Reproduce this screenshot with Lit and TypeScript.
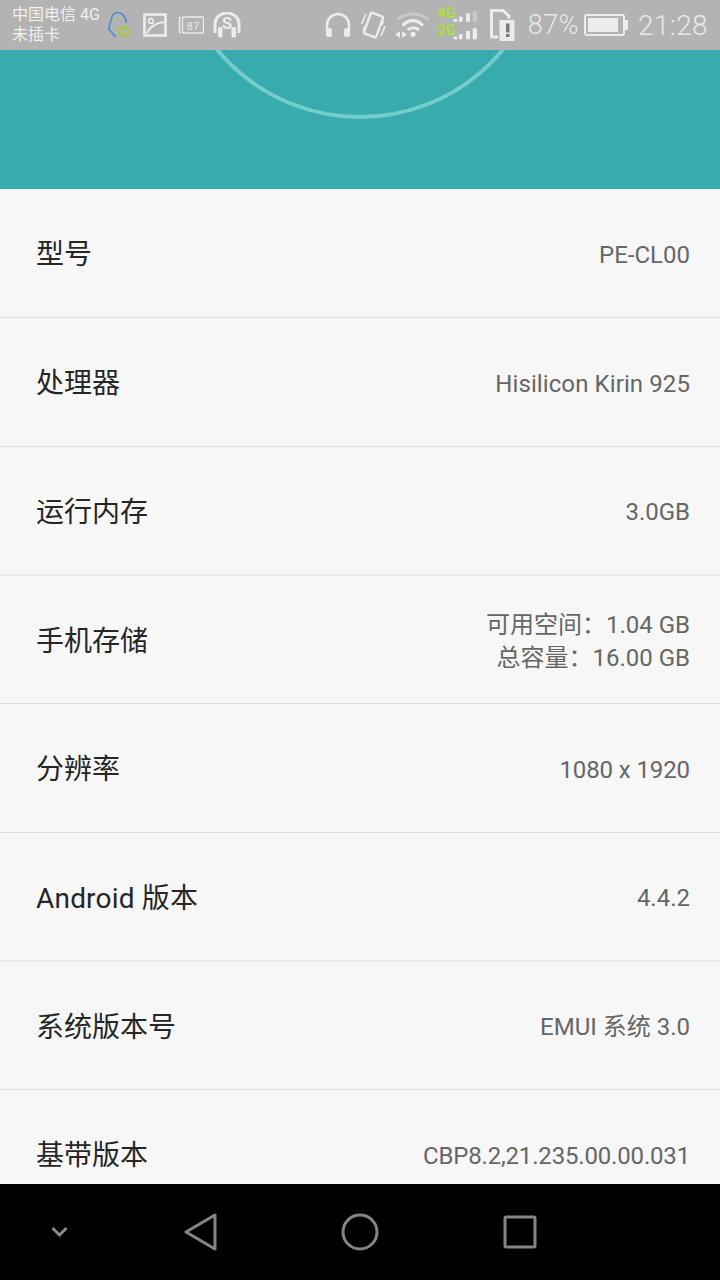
import { css, html, LitElement, svg } from 'lit';
import { customElement } from 'lit/decorators.js';

interface InfoRow {
  label: string;
  value: string[];
  // small tracking tweaks, the device's Roboto is a little different
  labelLs?: number;
  valueLs?: number;
}

const ROWS: InfoRow[] = [
  { label: '型号', value: ['PE-CL00'] },
  { label: '处理器', value: ['Hisilicon Kirin 925'], valueLs: 0.1 },
  { label: '运行内存', value: ['3.0GB'] },
  { label: '手机存储', value: ['可用空间：1.04 GB', '总容量：16.00 GB'] },
  { label: '分辨率', value: ['1080 x 1920'], valueLs: -0.1 },
  { label: 'Android 版本', value: ['4.4.2'], labelLs: 0.2 },
  { label: '系统版本号', value: ['EMUI 系统 3.0'] },
  { label: '基带版本', value: ['CBP8.2,21.235.00.00.031'], valueLs: -0.17 },
];

const W = '#ececec';

const icon = (w: number, h: number, body: unknown, ml = 0) => html`<svg
  class="ico"
  style="margin-left:${ml}px"
  width=${w}
  height=${h}
  viewBox="0 0 ${w} ${h}"
  fill="none"
  stroke=${W}
  stroke-width="2"
>${body}</svg>`;

const headphones = svg`
  <path d="M2 19v-6a11 11 0 0 1 22 0v6" stroke-width="2.6" />
  <rect x="1" y="16" width="6" height="9" rx="2.5" fill="${W}" stroke="none" />
  <rect x="19" y="16" width="6" height="9" rx="2.5" fill="${W}" stroke="none" />`;

@customElement('app-root')
export class AppRoot extends LitElement {
  static override styles = css`
    :host {
      display: block;
      width: 720px;
      height: 1280px;
      overflow: hidden;
      font-family: Roboto, 'Noto Sans CJK SC', sans-serif;
    }
    .page {
      display: flex;
      flex-direction: column;
      height: 1280px;
      background: #f7f7f7;
    }
    .status {
      flex: none;
      height: 50px;
      background: #b3b3b3;
      display: flex;
      align-items: center;
      padding: 0 12px;
    }
    .carrier {
      width: 92px;
      font-size: 16px;
      line-height: 20px;
      white-space: nowrap;
      color: #efefef;
    }
    .ico {
      flex: none;
      display: block;
    }
    .spacer {
      flex: 1;
    }
    .pct {
      margin-left: 11px;
      font-size: 27px;
      letter-spacing: 0.4px;
      color: #e8e8e8;
      font-weight: 300;
    }
    .time {
      margin-left: 9px;
      font-size: 28px;
      letter-spacing: 0.4px;
      color: #e8e8e8;
      font-weight: 300;
    }
    .net {
      position: relative;
      flex: none;
      width: 42px;
      height: 40px;
      margin-left: 8px;
    }
    .net span {
      position: absolute;
      left: 1px;
      font-size: 14px;
      line-height: 14px;
      font-weight: 700;
      color: #aee03a;
    }
    .net span:nth-child(1) {
      top: 1px;
    }
    .net span:nth-child(2) {
      top: 18px;
    }
    .net svg {
      position: absolute;
      left: 16px;
      top: 6px;
    }
    .hero {
      flex: none;
      position: relative;
      height: 139px;
      background: #38abae;
      overflow: hidden;
    }
    .ring {
      position: absolute;
      left: 173px;
      top: -305px;
      width: 374px;
      height: 374px;
      box-sizing: border-box;
      border-radius: 50%;
      border: 4px solid #74cccc;
    }
    .list {
      flex: 1;
      min-height: 0;
      overflow: hidden;
    }
    .row {
      box-sizing: border-box;
      height: 129px;
      padding: 0 30px 0 36px;
      display: flex;
      align-items: center;
      justify-content: space-between;
      border-bottom: 1px solid #dcdcdc;
    }
    /* the original rows are 128.67px, so every third line lands between two pixels */
    .row:nth-child(3n) {
      border-bottom: 2px solid #ebebeb;
    }
    .row:nth-child(3n + 1):not(:first-child) {
      height: 128px;
    }
    .label {
      font-size: 28px;
      color: #262626;
      white-space: nowrap;
      margin-bottom: 2px;
    }
    .value {
      font-size: 24px;
      line-height: 33px;
      color: #666;
      text-align: right;
      white-space: nowrap;
      margin-top: 4px;
    }
    .nav {
      flex: none;
      height: 96px;
      background: #000;
      display: flex;
      align-items: center;
    }
    .nav svg {
      flex: none;
      display: block;
    }
    .chev {
      margin-left: 50px;
    }
    .back {
      margin-left: 114px;
    }
    .home {
      margin-left: 123px;
    }
    .recent {
      margin-left: 124px;
    }
  `;

  private renderStatus() {
    return html`<div class="status">
      <div class="carrier">中国电信 4G<br />未插卡</div>
      ${icon(
        26,
        28,
        svg`<path d="M9 25.500C5 24 6 22 4.500 21L1.500 18C3 15 3 12 4 9C5 4 8 1.500 11 1.500C15 1.500 19 6 19.500 12" stroke="#4d8ad0" stroke-width="1.6"/>
        <circle cx="16.500" cy="20.500" r="4.500" stroke="#a5c456" stroke-width="3"/>`,
        3,
      )}
      ${icon(
        24,
        24,
        svg`<rect x="1.500" y="1.500" width="21" height="21" stroke-width="2.600"/>
        <circle cx="8" cy="8" r="2.400" stroke-width="1.600"/>
        <path d="M4 20c3-7 9-10 17-11" stroke-width="2.200"/>`,
        10,
      )}
      ${icon(
        26,
        18,
        svg`<path d="M3 1.500H1.500v15H3" stroke-width="1.400"/><rect x="4.500" y="1" width="21" height="16" rx="1" stroke-width="1.300"/>
        <text x="15" y="13.500" text-anchor="middle" font-size="11" fill="${W}" stroke="none" font-family="Roboto">87</text>`,
        11,
      )}
      ${icon(
        28,
        26,
        svg`<path d="M2 21v-9a12 11 0 0 1 24 0v9" stroke-width="3"/>
        <rect x="5" y="15" width="4.500" height="10.500" rx="1.500" fill="${W}" stroke="none"/>
        <rect x="18.500" y="15" width="4.500" height="10.500" rx="1.500" fill="${W}" stroke="none"/>
        <text x="14" y="17" text-anchor="middle" font-size="17" font-weight="700" fill="${W}" stroke="none" font-family="Roboto">S</text>`,
        9,
      )}
      <div class="spacer"></div>
      ${icon(26, 26, headphones)}
      ${icon(
        26,
        28,
        svg`<rect x="7" y="3" width="13" height="22" rx="1.500" transform="rotate(20 13.500 14)" stroke-width="2.400"/>
        <path d="M1.500 13L6 3M3 20l2-4.500M21 25l4-10M23.500 10l-1.500 4" stroke-width="1.600"/>`,
        9,
      )}
      ${icon(
        34,
        26,
        svg`<path d="M2.700 7.500C10 0 26 0 33.500 8" stroke="#c9c9c9" stroke-width="3"/>
        <path d="M7.700 13.700C13 7 23 7 27.700 13.700" stroke-width="3.200"/>
        <path d="M12.700 18C15.500 15 21 15 24 18" stroke-width="3.200"/>
        <circle cx="18" cy="22.300" r="2.600" fill="${W}" stroke="none"/>
        <path d="M5 19l-5 3.500 5 3.500zM7 19l5 3.500-5 3.500z" fill="${W}" stroke="none"/>`,
        9,
      )}
      <div class="net">
        <span>4G</span><span>2G</span>
        <svg width="26" height="30" viewBox="0 0 26 30" fill="${W}">
          <rect x="0.700" y="8" width="3.500" height="2.700" />
          <rect x="6" y="5.700" width="3.500" height="5" />
          <rect x="13" y="2.300" width="4" height="8.400" />
          <rect x="19.700" y="0" width="4.300" height="10.700" fill="#c9c9c9" />
          <rect x="0.700" y="25.700" width="3.500" height="2.600" />
          <rect x="6" y="23.300" width="3.500" height="5" />
          <rect x="13" y="20" width="4" height="8.300" />
          <rect x="19.700" y="17.300" width="4.300" height="11" />
        </svg>
      </div>
      ${icon(
        28,
        32,
        svg`<path d="M2.500 1.500H14L20 7V28H2.500z" stroke-width="3"/>
        <rect x="9" y="9.500" width="19" height="22.500" fill="#b3b3b3" stroke="none"/>
        <rect x="10.500" y="11" width="15" height="21" fill="${W}" stroke="none"/>
        <rect x="17" y="14.500" width="3.500" height="9" fill="#7a7a7a" stroke="none"/>
        <rect x="17" y="25" width="3.500" height="3" fill="#7a7a7a" stroke="none"/>`,
        10,
      )}
      <span class="pct">87%</span>
      ${icon(
        45,
        22,
        svg`<rect x="1" y="1" width="39" height="20" rx="2" stroke-width="2"/>
        <rect x="4" y="4" width="30" height="14" fill="${W}" stroke="none"/>
        <rect x="41" y="6" width="3" height="10" fill="${W}" stroke="none"/>`,
        5,
      )}
      <span class="time">21:28</span>
    </div>`;
  }

  override render() {
    return html`<div class="page">
      ${this.renderStatus()}
      <div class="hero"><div class="ring"></div></div>
      <div class="list">
        ${ROWS.map(
          (r) => html`<div class="row">
            <div class="label" style="letter-spacing:${r.labelLs ?? 0}px">${r.label}</div>
            <div class="value" style="letter-spacing:${r.valueLs ?? 0}px">
              ${r.value.map((v) => html`<div>${v}</div>`)}
            </div>
          </div>`,
        )}
      </div>
      <div class="nav">
        <svg class="chev" width="20" height="14" viewBox="0 0 20 14" fill="none" stroke="#8a8a8a" stroke-width="3">
          <path d="M2.500 3l7 7 7-7" />
        </svg>
        <svg class="back" width="34" height="38" viewBox="0 0 34 38" fill="none" stroke="#858585" stroke-width="3" stroke-linejoin="round">
          <path d="M31 2L2 19l29 17z" />
        </svg>
        <svg class="home" width="38" height="38" viewBox="0 0 38 38" fill="none" stroke="#858585" stroke-width="3">
          <circle cx="19" cy="19" r="17" />
        </svg>
        <svg class="recent" width="34" height="34" viewBox="0 0 34 34" fill="none" stroke="#858585" stroke-width="3" stroke-linejoin="round">
          <rect x="2" y="2" width="30" height="30" rx="1" />
        </svg>
      </div>
    </div>`;
  }
}

declare global {
  interface HTMLElementTagNameMap {
    'app-root': AppRoot;
  }
}
